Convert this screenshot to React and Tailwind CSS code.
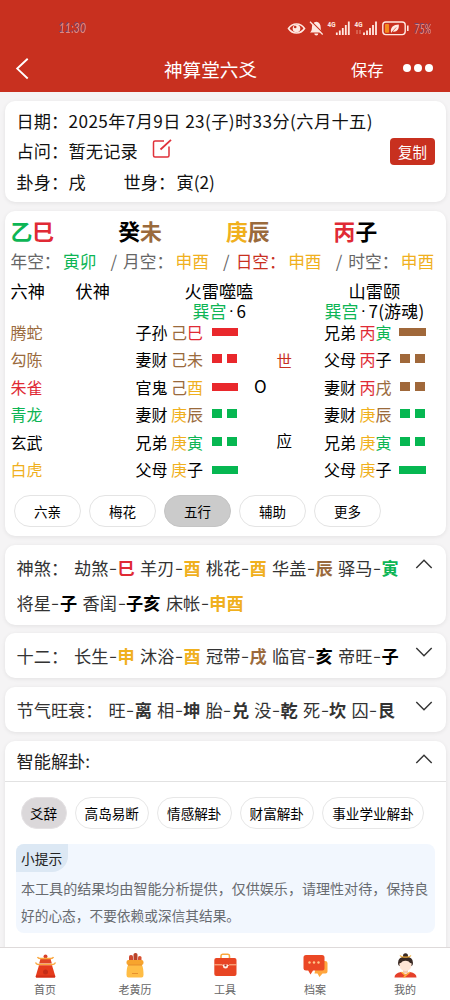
import React from "react";

const tone = {
  g: "text-[#0db555]",
  r: "text-[#e02a35]",
  y: "text-[#f0b01e]",
  b: "text-[#9a6a3c]",
  k: "text-black",
  d: "text-[#333333]",
};
const fill = { g: "bg-[#06b751]", r: "bg-[#e9282c]", b: "bg-[#a0683a]" };
const card = "mx-[5px] w-[441px] shrink-0 rounded-[10px] bg-white shadow-[0_1px_4px_rgba(0,0,0,0.08)]";

function Chars({ v }) {
  return v.map(([c, t], i) => (
    <span key={i} className={tone[t]}>{c}</span>
  ));
}

function StatusIcons() {
  return (
    <svg className="h-5 w-[164px]" viewBox="286 17 164 20" fill="none">
      <path d="M288.5 27.5c4-6 12-6 16 0c-4 6-12 6-16 0Z" stroke="#ffe9e2" strokeWidth="1.6" />
      <circle cx="296.5" cy="27.5" r="3.8" fill="#ffe9e2" />
      <circle cx="295.2" cy="26" r="1.3" fill="#c8301f" />
      <path d="M310 31.5c1.600-1.200 1.900-3 1.900-5c0-3.300 1.700-5.300 4.400-5.700c2.700.4 4.400 2.400 4.400 5.700c0 2 .3 3.800 1.900 5Z" fill="#ffe9e2" />
      <path d="M314.300 32.500h4a2 2 0 0 1-4 0Z" fill="#ffe9e2" />
      <path d="M311 20.300l12.500 12.500" stroke="#c8301f" strokeWidth="1.400" />
      <path d="M310 20.800l12.700 12.700" stroke="#ffe9e2" strokeWidth="1.300" />
      <text x="327.5" y="25.500" fontSize="7.500" fontWeight="700" fill="#ffe9e2" fontFamily="Roboto, sans-serif" textLength="8" lengthAdjust="spacingAndGlyphs">4G</text>
      <path d="M336.8 34v-2.5M339.8 34v-4.5M342.8 34v-7M345.8 34v-10M348.8 34v-13.5" stroke="#ffe9e2" strokeWidth="1.8" />
      <text x="354.5" y="25.500" fontSize="7.500" fontWeight="700" fill="#ffe9e2" fontFamily="Roboto, sans-serif" textLength="8" lengthAdjust="spacingAndGlyphs">4G</text>
      <path d="M357 29v4M360 29v4" stroke="#e58b7d" strokeWidth="1" />
      <path d="M364 34v-2.5M367 34v-4.5M370 34v-7M373 34v-10M376 34v-13.5" stroke="#ffe9e2" strokeWidth="1.8" />
      <rect x="382.8" y="21" width="22.4" height="12.6" rx="3" stroke="#ffe9e2" strokeWidth="1.4" />
      <rect x="385" y="23" width="4" height="8.8" rx="0.8" fill="#f58a1d" />
      <path d="M391 31c-.8-4.500 2.500-7.500 7.800-7.500c.5 5-2 7.900-6.300 7l-1.200 1.300Z" fill="#ffe9e2" />
      <path d="M392 31l4.200-4.600" stroke="#c8301f" strokeWidth="0.7" />
      <path d="M407.800 24.500v5.600" stroke="#ffe9e2" strokeWidth="1.600" />
      <text x="414.500" y="32.500" fontSize="13" fontStyle="italic" fill="#e08a80" fontFamily="Lato, sans-serif" textLength="17" lengthAdjust="spacingAndGlyphs" style={{ filter: "drop-shadow(-0.8px -0.5px 0 #6d4670)" }}>75%</text>
    </svg>
  );
}

function Header() {
  return (
    <header className="h-[92px] shrink-0 bg-[#c8301f]">
      <div className="flex h-[46px] items-center justify-between pt-[9px]">
        <svg className="ml-[56px] h-6 w-9" viewBox="0 0 36 24">
          <text x="3" y="16.500" fontSize="14" fontStyle="italic" fill="#e08a80" fontFamily="Lato, sans-serif" textLength="27" lengthAdjust="spacingAndGlyphs" style={{ filter: "drop-shadow(-0.8px -0.5px 0 #6d4670)" }}>11:30</text>
        </svg>
        <StatusIcons />
      </div>
      <div className="flex h-[46px] items-center text-white">
        <svg className="ml-[15px] h-[22px] w-[15px]" viewBox="0 0 15 22" fill="none">
          <path d="M12.700 0.700L2.200 10.600L12.700 20.500" stroke="white" strokeWidth="1.900" />
        </svg>
        <div className="ml-[134px] w-[100px] whitespace-nowrap text-[18.600px] leading-[46px]">神算堂六爻</div>
        <div className="ml-[87px] w-[34px] whitespace-nowrap text-[16.300px] leading-[48px]">保存</div>
        <div className="ml-[18px] flex gap-[3.500px] pb-[2px]">
          <i className="size-[7.500px] rounded-full bg-white" />
          <i className="size-[7.500px] rounded-full bg-white" />
          <i className="size-[7.500px] rounded-full bg-white" />
        </div>
      </div>
    </header>
  );
}

function Info() {
  return (
    <section className={`${card} mt-[9px] flex h-[101px] items-center justify-between pl-[11.500px] pr-[11px] text-[17.200px] text-[#111]`}>
      <div className="whitespace-nowrap leading-[30.300px]">
        <div className="flex"><span className="w-[52px]">日期：</span><span className="tracking-[0.400px]">2025年7月9日 23(子)时33分(六月十五)</span></div>
        <div className="flex">
          <span className="w-[52px]">占问：</span><span className="w-[83px] tracking-[0.150px]">暂无记录</span>
          <svg className="mt-[3px] h-[20px] w-[20px]" viewBox="0 0 20 20" fill="none" stroke="#e0313a" strokeWidth="1.500">
            <path d="M12 2H3Q1.500 2 1.500 3.500V16.500Q1.500 18 3 18H15.500Q17 18 17 16.500V7.500" />
            <path d="M8.500 10.500L19 0.800" strokeWidth="1.800" />
          </svg>
        </div>
        <div className="flex"><span className="w-[52px]">卦身：</span><span className="w-[55px]">戌</span><span className="w-[53px]">世身：</span><span>寅(2)</span></div>
      </div>
      <button className="h-[27px] w-[45px] rounded-[4px] bg-[#c8301f] text-[14.500px] leading-[27px] text-white">复制</button>
    </section>
  );
}

function Yao({ solid, c }) {
  return solid ? (
    <i className={`h-2 w-[26.500px] ${fill[c]}`} />
  ) : (
    <span className="flex w-[26.500px] justify-start gap-[5px] pb-[2.500px] pl-[0.500px]">
      <i className={`h-[9px] w-[10px] ${fill[c]}`} />
      <i className={`h-[9px] w-[10px] ${fill[c]}`} />
    </span>
  );
}

const rows = [
  ["腾蛇", "b", "子孙", [["己", "b"], ["巳", "r"]], true, "r", "", "", "兄弟", [["丙", "r"], ["寅", "g"]], true, "b"],
  ["勾陈", "b", "妻财", [["己", "b"], ["未", "b"]], false, "r", "", "世", "父母", [["丙", "r"], ["子", "k"]], false, "b"],
  ["朱雀", "r", "官鬼", [["己", "b"], ["酉", "y"]], true, "r", "O", "", "妻财", [["丙", "r"], ["戌", "b"]], false, "b"],
  ["青龙", "g", "妻财", [["庚", "y"], ["辰", "b"]], false, "g", "", "", "妻财", [["庚", "y"], ["辰", "b"]], false, "g"],
  ["玄武", "k", "兄弟", [["庚", "y"], ["寅", "g"]], false, "g", "", "应", "兄弟", [["庚", "y"], ["寅", "g"]], false, "g"],
  ["白虎", "y", "父母", [["庚", "y"], ["子", "k"]], true, "g", "", "", "父母", [["庚", "y"], ["子", "k"]], true, "g"],
];

function Chart() {
  const pillars = [[["乙", "g"], ["巳", "r"]], [["癸", "k"], ["未", "b"]], [["庚", "y"], ["辰", "b"]], [["丙", "r"], ["子", "k"]]];
  const voids = [["年空：", "寅卯", "g", "text-[#666]"], ["月空：", "申酉", "y", "text-[#666]"], ["日空：", "申酉", "y", "text-[#c8301f]"], ["时空：", "申酉", "y", "text-[#666]"]];
  return (
    <section className={`${card} mt-[8.500px] h-[325.500px] whitespace-nowrap pl-[5.500px] text-black`}>
      <div className="flex h-[38px] pt-[5px] text-[21.800px] font-bold leading-[30px]">
        {pillars.map((p, i) => <div key={i} className="w-[107.700px] shrink-0"><Chars v={p} /></div>)}
      </div>
      <div className="flex h-[28px] text-[16.700px] leading-[25px]">
        {voids.map(([a, b, c, lab], i) => (
          <div key={a} className="flex w-[112.600px] shrink-0">
            <span className={`w-[52.500px] ${lab}`}>{a}</span>
            <span className={`w-[47.500px] ${tone[c]}`}>{b}</span>
            {i < 3 && <span className="text-[#666]">/</span>}
          </div>
        ))}
      </div>
      <div className="flex h-[24px] text-[17.200px] leading-[28px]">
        <span className="w-[65px]">六神</span><span className="w-[109px]">伏神</span><span className="w-[164px]">火雷噬嗑</span><span>山雷颐</span>
      </div>
      <div className="flex h-[18px] pl-[182px] text-[17px] leading-[19px]">
        <span className="flex w-[132px]"><b className="w-[36px] font-normal text-[#0db555]">巽宫</b><span className="w-[8px] font-['Liberation_Sans',sans-serif] leading-[20px]">·</span><span>6</span></span>
        <span className="flex"><b className="w-[36px] font-normal text-[#0db555]">巽宫</b><span className="w-[8px] font-['Liberation_Sans',sans-serif] leading-[20px]">·</span><span className="tracking-[0.200px]">7(游魂)</span></span>
      </div>
      <div className="text-[16px] leading-[27.500px]">
        {rows.map((r, i) => (
          <div key={i} className="flex h-[27.500px] items-center">
            <span className={`w-[125px] ${tone[r[1]]}`}>{r[0]}</span>
            <span className="w-[35.500px]">{r[2]}</span>
            <span className="w-[40.500px]"><Chars v={r[3]} /></span>
            <Yao solid={r[4]} c={r[5]} />
            <span className="w-[38.500px] pb-[3px] pl-[16px] text-[17px]">{r[6]}</span>
            <span className={`w-[47.500px] text-[15.500px] ${r[7] === "世" ? "pt-[2px] text-[#c8301f]" : "pb-[3px]"}`}>{r[7]}</span>
            <span className="w-[35.500px]">{r[8]}</span>
            <span className="w-[39.500px]"><Chars v={r[9]} /></span>
            <Yao solid={r[10]} c={r[11]} />
          </div>
        ))}
      </div>
      <div className="flex gap-[8px] pl-[3.500px] pt-[11px]">
        {["六亲", "梅花", "五行", "辅助", "更多"].map((t, i) => (
          <button key={t} className={`h-8 w-[67px] rounded-full border text-[13.500px] leading-[30px] ${i === 2 ? "border-[#c4c4c4] bg-[#cbcbcb]" : "border-[#e4e4e4] bg-white"}`}>{t}</button>
        ))}
      </div>
    </section>
  );
}

function Chevron({ up }) {
  return (
    <svg className="h-[10px] w-[18px] shrink-0" viewBox="0 0 18 10" fill="none" stroke="#333" strokeWidth="1.400">
      <path d={up ? "M1.300 9L9 1.300L16.700 9" : "M1.300 1L9 8.700L16.700 1"} />
    </svg>
  );
}

function Pairs({ items, step }) {
  return items.map(([a, b, c], i) => (
    <span key={i} className={`flex shrink-0 ${step}`}>
      <span>{a}</span>
      <span className="flex w-[9px] justify-center"><span className="-translate-y-px scale-x-135">-</span></span>
      <b className={tone[c]}>{b}</b>
    </span>
  ));
}

function Details() {
  return (
    <div className="whitespace-nowrap text-[17.200px] text-[#333]">
      <section className={`${card} mt-[8.500px] flex h-[80px] pl-[11.500px] pt-[5px]`}>
        <div className="w-[398.500px] leading-[35px]">
          <div className="flex"><span className="w-[57.500px] shrink-0">神煞：</span>
            <Pairs step="w-[66px]" items={[["劫煞", "巳", "r"], ["羊刃", "酉", "y"], ["桃花", "酉", "y"], ["华盖", "辰", "b"], ["驿马", "寅", "g"]]} />
          </div>
          <div className="flex gap-[5.500px]"><Pairs step="" items={[["将星", "子", "k"], ["香闺", "子亥", "k"], ["床帐", "申酉", "y"]]} /></div>
        </div>
        <div className="pt-[9px]"><Chevron up /></div>
      </section>
      <section className={`${card} mt-[8.500px] flex h-[44.500px] pl-[11.500px] leading-[45px]`}>
        <div className="flex w-[398.500px]"><span className="w-[57.500px] shrink-0">十二：</span>
          <Pairs step="w-[66px]" items={[["长生", "申", "y"], ["沐浴", "酉", "y"], ["冠带", "戌", "b"], ["临官", "亥", "k"], ["帝旺", "子", "k"]]} />
        </div>
        <div className="pt-[14px]"><Chevron /></div>
      </section>
      <section className={`${card} mt-[9px] flex h-[45px] pl-[11.500px] leading-[45px]`}>
        <div className="flex w-[398.500px]"><span className="w-[92px] shrink-0">节气旺衰：</span>
          <Pairs step="w-[48.600px]" items={[["旺", "离", "d"], ["相", "坤", "d"], ["胎", "兑", "d"], ["没", "乾", "d"], ["死", "坎", "d"], ["囚", "艮", "d"]]} />
        </div>
        <div className="pt-[14px]"><Chevron /></div>
      </section>
    </div>
  );
}

function Reading() {
  const chips = [["爻辞", "w-[46px]"], ["高岛易断", "w-[74.500px]"], ["情感解卦", "w-[74.500px]"], ["财富解卦", "w-[74.500px]"], ["事业学业解卦", "w-[102px]"]];
  return (
    <section className={`${card} mt-[9px] h-[230px]`}>
      <div className="flex h-[41px] items-center border-b border-[#e2e2e2] pl-[11.500px] text-[17.200px] text-[#222]">
        <span className="w-[398.500px]">智能解卦:</span><div className="pb-[3px]"><Chevron up /></div>
      </div>
      <div className="flex gap-[8px] pl-[15.500px] pt-[15px]">
        {chips.map(([t, w], i) => (
          <button key={t} className={`h-8 ${w} shrink-0 whitespace-nowrap rounded-full border text-[13.600px] leading-[31px] text-black ${i === 0 ? "border-[#e5e2e4] bg-[#dbd8da]" : "border-[#e7e7e7] bg-white"}`}>{t}</button>
        ))}
      </div>
      <div className="ml-[11px] mt-[15.500px] h-[89px] w-[418.500px] rounded-[8px] bg-[#f2f7fe]">
        <div className="h-[28px] w-[52px] rounded-br-[16px] rounded-tl-[8px] bg-[#dce8f4] pl-[5px] text-[13.700px] leading-[29px] text-[#222]">小提示</div>
        <p className="whitespace-nowrap pl-[5px] pt-[3px] text-[14.050px] leading-[26.500px] text-[#686b70]">本工具的结果均由智能分析提供，仅供娱乐，请理性对待，保持良<br /><span className="text-[13.700px]">好的心态，不要依赖或深信其结果。</span></p>
      </div>
    </section>
  );
}

const icons = {
  首页: (
    <>
      <circle cx="12.500" cy="3.500" r="2" fill="#d9402a" />
      <path d="M7.500 5.500h10l1.300 5h-12.600Z" fill="#df4526" />
      <path d="M4.500 4q.800 1.700 3 1.500h10q2.200.2 3-1.500M2.500 9.500q.800 2 3 2h14q2.200 0 3-2" stroke="#fba63c" strokeWidth="1.400" fill="none" />
      <path d="M6 12.200h13l3.300 11q.200 1.300-1 1.300h-17.600q-1.200 0-1-1.300Z" fill="#e53b1c" />
      <path d="M3 22.500h19v2h-19Z" fill="#d22f17" />
      <circle cx="12.500" cy="19" r="2.500" fill="#c42c17" />
    </>
  ),
  老黄历: (
    <>
      <rect x="6" y="2" width="4" height="9" rx="1.800" fill="#cf4930" />
      <rect x="10.500" y="0" width="4" height="10" rx="1.800" fill="#b9442b" />
      <rect x="15" y="3" width="3.500" height="8" rx="1.600" fill="#d95231" />
      <rect x="3.500" y="7" width="17" height="5" rx="2" fill="#f7a42d" />
      <path d="M5 12h14q1.500 3 1.500 10q0 2.500-2 2.500h-13q-2 0-2-2.500q0-7 1.500-10Z" fill="#ffbd45" />
      <path d="M5 12h14M9 20.500h6" stroke="#e38b2a" strokeWidth="0.900" />
    </>
  ),
  工具: (
    <>
      <path d="M8 6V3Q8 1.300 9.500 1.300h5.500Q16.500 1.300 16.500 3V6" stroke="#fba63c" strokeWidth="1.600" fill="none" />
      <rect x="1.300" y="5" width="22.200" height="18" rx="2" fill="#e84523" />
      <path d="M1.300 11.800h7.700l1.500 1M15 12.800l1.500-1h7" stroke="#ffc59c" strokeWidth="1" fill="none" />
      <path d="M10 11.500h5v1.500a2.500 2.500 0 0 1-5 0Z" fill="#fff1e4" />
      <circle cx="12.500" cy="12.500" r="1.100" fill="#a52a20" />
    </>
  ),
  档案: (
    <>
      <path d="M14 8h8q2.500 0 2.500 2v8.500q0 2-2 2h-3l-3 3.500l-2-3.500h-3Z" fill="#ffa63e" />
      <path d="M3 2h16q2.500 0 2.500 2.500v11q0 2-2 2H10l-2.500 4l-2.300-4H3q-2.500 0-2.500-2V4.500Q.500 2 3 2Z" fill="#eb4825" />
      <g fill="#ffc98d"><circle cx="6.500" cy="9.500" r="1.200" /><circle cx="11" cy="9.500" r="1.200" /><circle cx="15.500" cy="9.500" r="1.200" /></g>
    </>
  ),
  我的: (
    <>
      <circle cx="12.500" cy="2.800" r="2.500" fill="#392923" />
      <path d="M5 10q0-6.500 7.500-6.500t7.500 6.500q0 2-1.200 3h-12.600q-1.200-1-1.200-3Z" fill="#392923" />
      <path d="M7 2.500q1.500 2 5.500 1.500q4 .5 5.500-1.500" stroke="#f1ac3b" strokeWidth="1.200" />
      <path d="M10 15h5v5.500h-5Z" fill="#f5cdb4" />
      <path d="M6.300 10.500q2.200-.500 3-2q3.200-1.500 6.400 0q.800 1.500 3 2q0 7.500-6.200 7.500t-6.200-7.500Z" fill="#ffe5d5" />
      <path d="M1.500 24.500q0-4.500 6.500-5.500l4.500 2.500l4.500-2.500q6.500 1 6.500 5.500Z" fill="#e5402a" />
      <path d="M8.500 19l4.500 4M17 19l-6.500 5.500" stroke="#ffb13d" strokeWidth="1.300" />
    </>
  ),
};

function Nav() {
  return (
    <nav className="flex h-[53px] shrink-0 border-t border-[#dedada] bg-white">
      {Object.entries(icons).map(([name, art]) => (
        <div key={name} className="flex w-[90px] flex-col items-center pt-[5px]">
          <svg className="h-[26px] w-[25px]" viewBox="0 0 25 26" fill="none">{art}</svg>
          <span className="mt-[2px] text-[11px] leading-[16px] text-[#666]">{name}</span>
        </div>
      ))}
    </nav>
  );
}

export default function App() {
  return (
    <div lang="zh-CN" className="flex h-[1000px] w-[450px] flex-col overflow-hidden bg-[#f5f4f5] font-['Noto_Sans_CJK_SC',sans-serif]">
      <Header />
      <main className="min-h-0 flex-1 overflow-hidden">
        <Info />
        <Chart />
        <Details />
        <Reading />
      </main>
      <Nav />
    </div>
  );
}
